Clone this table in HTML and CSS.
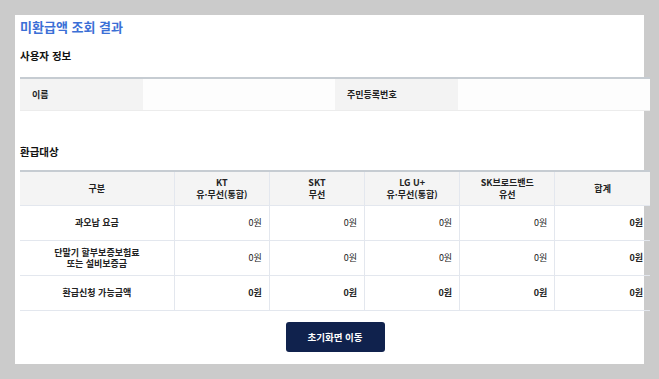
FILE: index.html
```html
<!DOCTYPE html>
<html lang="ko">

<head>
  <meta charset="UTF-8">
  <meta name="viewport" content="width=device-width, initial-scale=1.0">
  <title>미환급액 조회 결과</title>
  <link rel="stylesheet" href="styles.css">
</head>

<body>
  <div class="panel">
    <h1>미환급액 조회 결과</h1>

    <div class="content">
      <h2>사용자 정보</h2>
      <table class="info-table">
        <colgroup>
          <col class="label-col">
          <col class="value-col">
          <col class="label-col">
          <col class="value-col">
        </colgroup>
        <tr>
          <th>이름</th>
          <td></td>
          <th>주민등록번호</th>
          <td></td>
        </tr>
      </table>

      <h2 class="section-gap">환급대상</h2>
      <table class="refund-table">
        <colgroup>
          <col class="name-col">
          <col class="num-col">
          <col class="num-col">
          <col class="num-col">
          <col class="num-col">
          <col class="num-col">
        </colgroup>
        <thead>
          <tr>
            <th>구분</th>
            <th>KT<br>유·무선(통합)</th>
            <th>SKT<br>무선</th>
            <th>LG U+<br>유·무선(통합)</th>
            <th>SK브로드밴드<br>유선</th>
            <th>합계</th>
          </tr>
        </thead>
        <tbody>
          <tr>
            <th>과오납 요금</th>
            <td>0원</td>
            <td>0원</td>
            <td>0원</td>
            <td>0원</td>
            <td class="sum">0원</td>
          </tr>
          <tr>
            <th>단말기 할부보증보험료<br>또는 설비보증금</th>
            <td>0원</td>
            <td>0원</td>
            <td>0원</td>
            <td>0원</td>
            <td class="sum">0원</td>
          </tr>
          <tr class="total">
            <th>환급신청 가능금액</th>
            <td>0원</td>
            <td>0원</td>
            <td>0원</td>
            <td>0원</td>
            <td class="sum">0원</td>
          </tr>
        </tbody>
      </table>

      <div class="actions">
        <button class="home-button">초기화면 이동</button>
      </div>
    </div>
  </div>
</body>

</html>
```

FILE: styles.css
```css
body {
  margin: 0;
  background-color: #cbcbcb;
  color: #222;
  font-family: "Noto Sans CJK KR", "Noto Sans", sans-serif;
}

.panel {
  margin: 15px;
  height: 349px;
  box-sizing: border-box;
  padding: 0 5px 13px;
  background-color: #fff;
}

h1 {
  margin: 0;
  font-size: 13px;
  line-height: 23px;
  font-weight: bold;
  color: #3b6fd6;
}

h2 {
  margin: 10px 0 13px;
  font-size: 10.5px;
  line-height: 16px;
  font-weight: bold;
  color: #111;
}

h2.section-gap {
  margin-top: 33px;
  margin-bottom: 10px;
}

.content {
  width: 630px;
}

table {
  width: 630px;
  table-layout: fixed;
  border-collapse: collapse;
  font-size: 9px;
}

/* 사용자 정보 */
.info-table {
  border-top: 2px solid #c6ccd2;
  border-bottom: 1px solid #ececec;
}

.info-table .label-col {
  width: 123px;
}

.info-table .value-col {
  width: 192px;
}

.info-table th {
  height: 31px;
  padding: 0 12px;
  text-align: left;
  background-color: #f3f3f3;
}

.info-table td {
  background-color: #fdfdfd;
}

/* 환급대상 */
.refund-table {
  border-top: 2px solid #c6ccd2;
}

.refund-table .name-col {
  width: 154px;
}

.refund-table .num-col {
  width: 95px;
}

.refund-table th,
.refund-table td {
  height: 34px;
  padding: 0 7px;
  line-height: 11.5px;
  border-bottom: 1px solid #e3e7ee;
  border-right: 1px solid #e3e7ee;
}

.refund-table th:last-child,
.refund-table td:last-child {
  border-right: none;
}

.refund-table thead th {
  height: 33px;
  background-color: #f4f4f4;
  text-align: center;
}

.refund-table tbody th {
  text-align: center;
}

.refund-table td {
  text-align: right;
  font-weight: normal;
}

.refund-table td.sum,
.refund-table .total td {
  font-weight: bold;
}

.actions {
  margin-top: 11px;
  text-align: center;
}

.home-button {
  width: 99px;
  height: 30px;
  border: none;
  border-radius: 3px;
  background-color: #10224d;
  color: #fff;
  font-family: inherit;
  font-size: 9.5px;
  font-weight: bold;
  cursor: pointer;
}
```
